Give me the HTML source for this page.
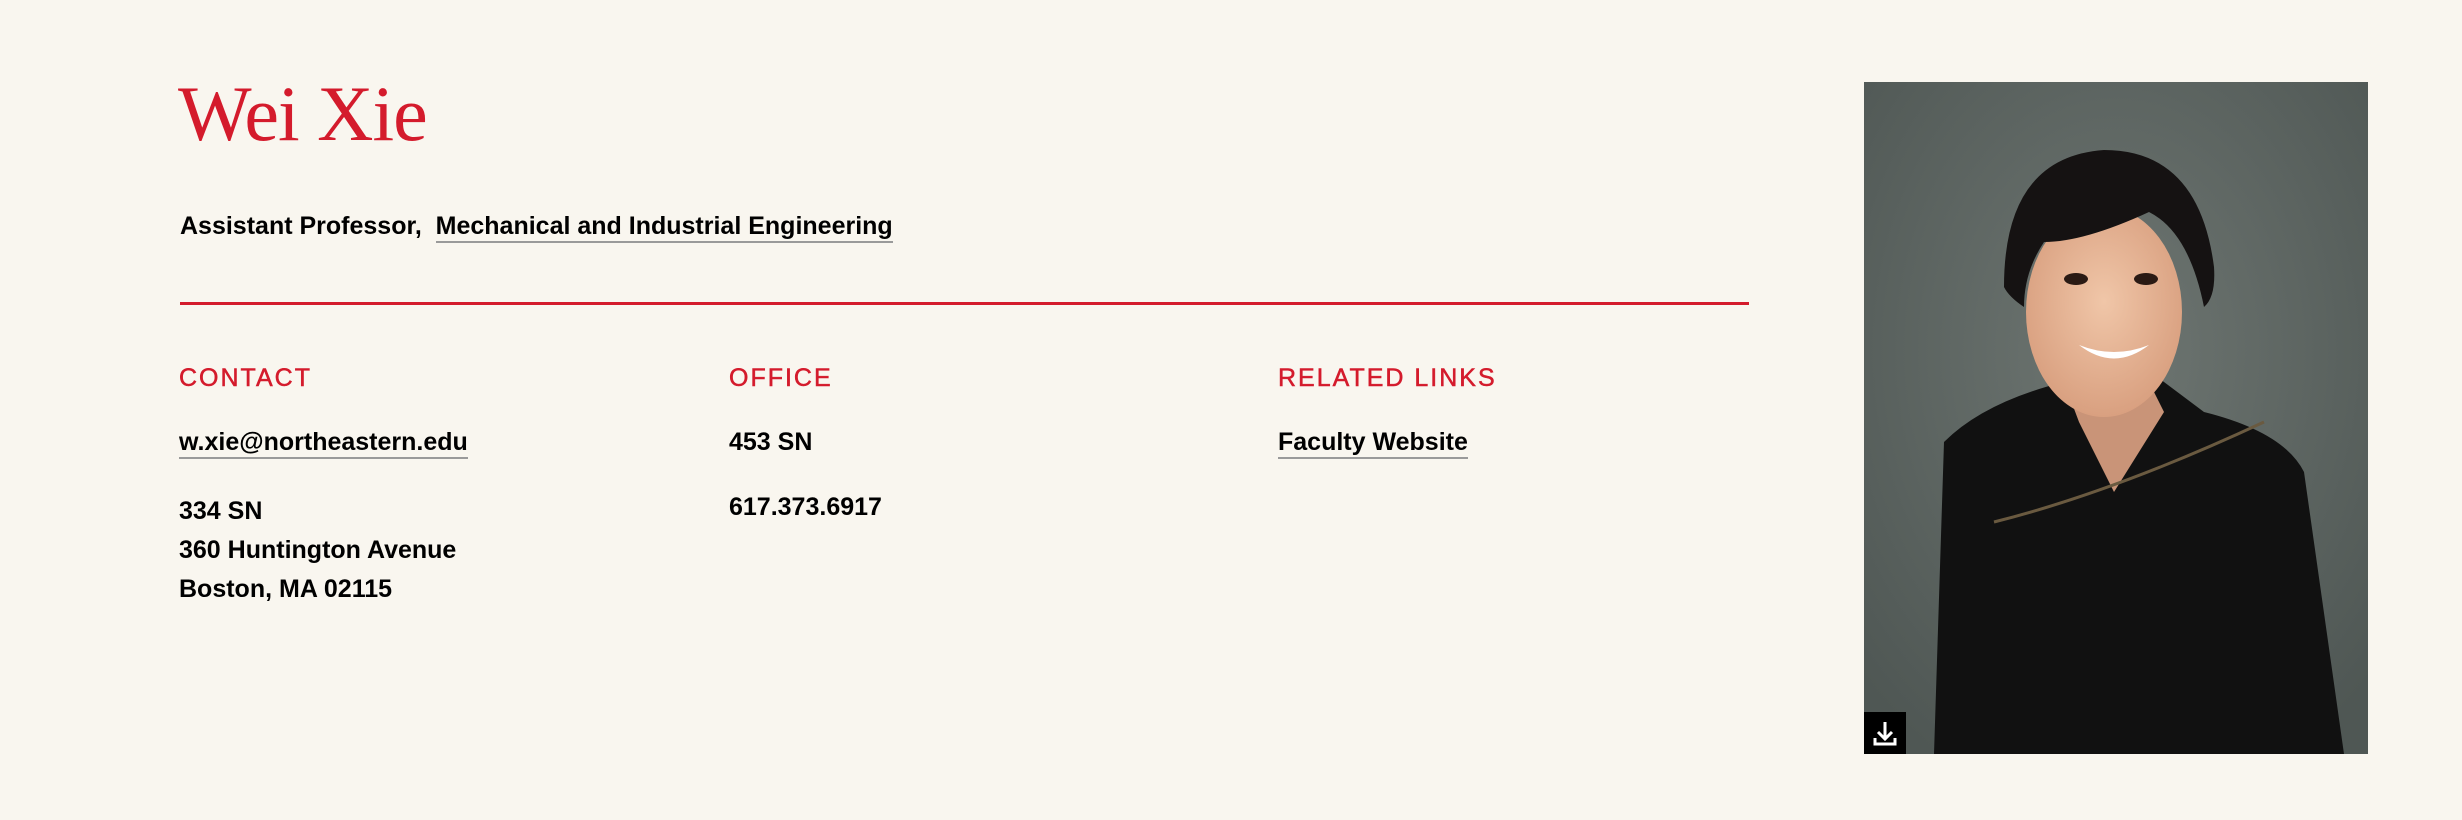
<!DOCTYPE html>
<html><head><meta charset="utf-8"><style>
html,body{margin:0;padding:0}
body{width:2462px;height:820px;background:#f9f6ef;position:relative;overflow:hidden;font-family:"Liberation Sans",sans-serif;color:#000}
.a{position:absolute;white-space:nowrap}
h1{position:absolute;left:178px;top:64px;margin:0;font-family:"Liberation Serif",serif;font-weight:normal;font-size:78px;line-height:100px;color:#d41b2c;letter-spacing:-1px}
.t{font-size:25px;font-weight:bold;line-height:30px}
.u{border-bottom:2px solid #9a9a9a;padding-bottom:1px}
.h{font-size:25px;color:#d41b2c;letter-spacing:2px;line-height:30px;-webkit-text-stroke:0.5px #d41b2c}
</style></head><body>
<h1>Wei Xie</h1>
<div class="a t" style="left:180px;top:211px">Assistant Professor,&nbsp; <span class="u">Mechanical and Industrial Engineering</span></div>
<div class="a" style="left:180px;top:302px;width:1569px;height:3px;background:#d41b2c"></div>

<div class="a h" style="left:179px;top:363px">CONTACT</div>
<div class="a h" style="left:729px;top:363px">OFFICE</div>
<div class="a h" style="left:1278px;top:363px">RELATED LINKS</div>

<div class="a t" style="left:179px;top:427px"><span class="u">w.xie@northeastern.edu</span></div>
<div class="a t" style="left:179px;top:492px;line-height:39px">334 SN<br>360 Huntington Avenue<br>Boston, MA 02115</div>
<div class="a t" style="left:729px;top:427px">453 SN</div>
<div class="a t" style="left:729px;top:492px">617.373.6917</div>
<div class="a t" style="left:1278px;top:427px"><span class="u">Faculty Website</span></div>

<svg class="a" style="left:1864px;top:82px" width="504" height="672" viewBox="0 0 504 672">
<defs>
<radialGradient id="bg" cx="50%" cy="40%" r="70%"><stop offset="0" stop-color="#6e7672"/><stop offset="1" stop-color="#4f5754"/></radialGradient>
<radialGradient id="sk" cx="50%" cy="45%" r="55%"><stop offset="0" stop-color="#f0c6a8"/><stop offset="1" stop-color="#d9a080"/></radialGradient>
</defs>
<rect width="504" height="672" fill="url(#bg)"/>
<path d="M70 672 L80 360 Q120 320 200 300 L260 270 L340 330 Q420 350 440 390 L480 672 Z" fill="#111"/>
<path d="M200 300 L265 260 L300 330 L250 410 L215 340 Z" fill="#c99478"/>
<ellipse cx="240" cy="230" rx="78" ry="105" fill="url(#sk)"/>
<path d="M140 205 Q140 75 240 68 Q335 68 350 185 Q352 215 340 225 Q325 150 285 130 Q220 160 180 160 Q160 190 160 225 Q145 215 140 205Z" fill="#151212"/>
<ellipse cx="212" cy="197" rx="12" ry="6" fill="#2a1a14"/>
<ellipse cx="282" cy="197" rx="12" ry="6" fill="#2a1a14"/>
<path d="M215 263 Q250 277 285 263 Q250 290 215 263Z" fill="#fff"/>
<path d="M130 440 Q250 410 400 340" stroke="#6a5a40" stroke-width="3" fill="none"/>
<rect x="0" y="630" width="42" height="42" fill="#000"/>
<path d="M21 640 V656 M14 650 L21 657 L28 650 M11 656 V662 H31 V656" stroke="#fff" stroke-width="3" fill="none"/>
</svg>
</body></html>
